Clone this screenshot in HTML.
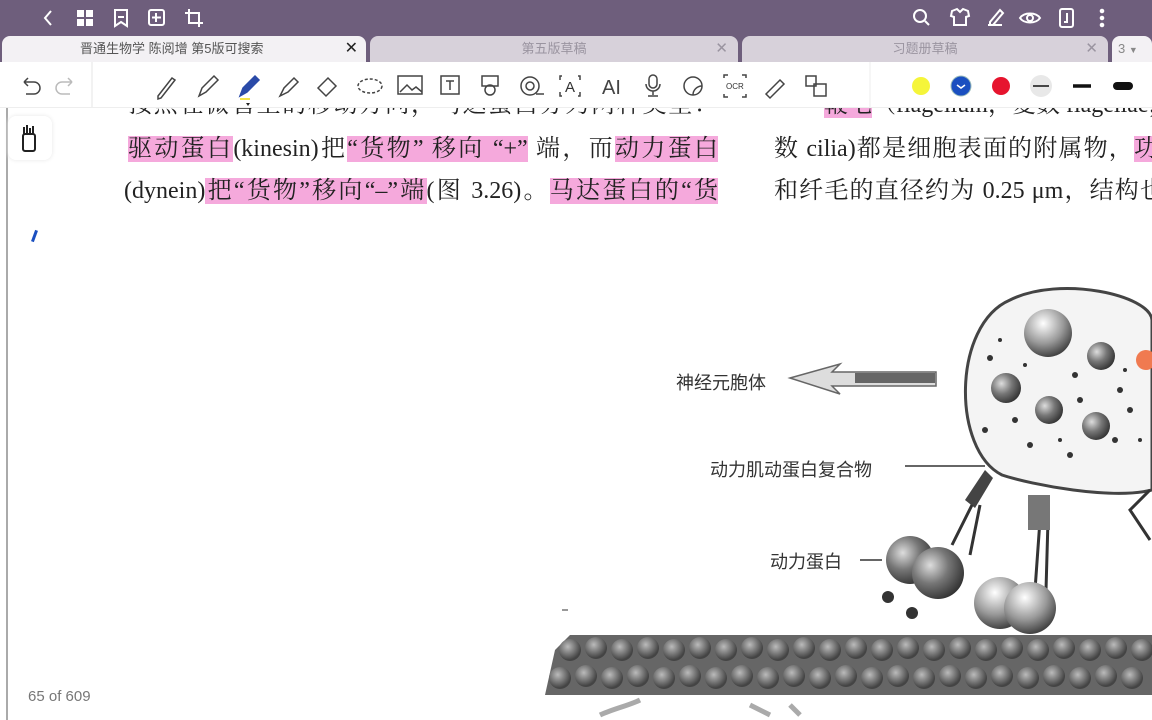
<!DOCTYPE html>
<html><head><meta charset="utf-8"><style>
*{margin:0;padding:0;box-sizing:border-box}
body{width:1152px;height:720px;overflow:hidden;background:#fff;position:relative;font-family:"Liberation Sans","Noto Sans CJK SC",sans-serif}
.top{position:absolute;left:0;top:0;width:1152px;height:36px;background:#6e5e7c}
.tabs{position:absolute;left:0;top:36px;width:1152px;height:26px;background:#6e5e7c}
.tab{position:absolute;top:0;height:26px;border-radius:8px 8px 0 0;font-size:13px;color:#9a94a0;text-align:center;line-height:26px}
.tb{position:absolute;left:0;top:62px;width:1152px;height:46px;background:#fff;border-bottom:1px solid #eee}
.txt{position:absolute;font-family:"Liberation Serif","Noto Serif CJK SC",serif;font-size:24px;color:#222;white-space:nowrap;text-align:justify;text-align-last:justify;line-height:34px}
.hl{background:#f5a9dc}
.lbl{position:absolute;font-family:"Liberation Sans","Noto Sans CJK SC",sans-serif;font-size:18px;color:#333}
</style></head><body>
<div class="top">
<svg width="1152" height="36" style="position:absolute;left:0;top:0" fill="none" stroke="#fff" stroke-width="2">
<path d="M51 11l-6 7 6 7"/>
<rect x="77" y="10" width="7" height="7" fill="#fff" stroke="none"/><rect x="86" y="10" width="7" height="7" fill="#fff" stroke="none"/><rect x="77" y="19" width="7" height="7" fill="#fff" stroke="none"/><rect x="86" y="19" width="7" height="7" fill="#fff" stroke="none"/>
<path d="M115 10h12v16l-6-4-6 4z"/><path d="M118 17h6"/>
<rect x="149" y="10" width="15" height="15" rx="2"/><path d="M156 13v9M152 17.5h9"/>
<path d="M189 9v14h14M185 13h14v14"/>
<circle cx="920" cy="16" r="6"/><path d="M925 21l4 4"/>
<path d="M952 11l5-2 3 3 3-3 5 2 1 5-3 1v8h-12v-8l-3-1z"/>
<path d="M988 25h14M990 22l10-12 3 3-10 12h-3z"/>
<path d="M1020 18c4-6 16-6 20 0-4 6-16 6-20 0z"/><circle cx="1030" cy="18" r="3"/>
<rect x="1060" y="9" width="13" height="18" rx="2"/><path d="M1067 13v9h-3"/>
<circle cx="1102" cy="11" r="1.3" fill="#fff"/><circle cx="1102" cy="18" r="1.3" fill="#fff"/><circle cx="1102" cy="25" r="1.3" fill="#fff"/>
</svg></div>
<div class="tabs">
<div class="tab" style="left:2px;width:364px;background:#f3f1f4;color:#555;text-align:left;padding-left:78px">晋通生物学 陈阅增 第5版可搜索<span style="position:absolute;right:8px;color:#222;font-size:16px">✕</span></div>
<div class="tab" style="left:370px;width:368px;background:#d7d1da">第五版草稿<span style="position:absolute;right:10px;font-size:15px">✕</span></div>
<div class="tab" style="left:742px;width:366px;background:#d7d1da">习题册草稿<span style="position:absolute;right:10px;font-size:15px">✕</span></div>
<div class="tab" style="left:1112px;width:40px;background:#f3f1f4;text-align:left;padding-left:6px;color:#888">3 <span style="font-size:9px">▼</span></div>
</div>
<div class="tb">
<svg width="1152" height="46" style="position:absolute;left:0;top:0" fill="none" stroke="#444" stroke-width="1.5">
<path d="M24 20h10a6 6 0 010 12h-8M24 20l4-4M24 20l4 4"/>
<path d="M72 20H62a6 6 0 000 12h8M72 20l-4-4M72 20l-4 4" stroke="#bbb"/>
<line x1="92" y1="0" x2="92" y2="46" stroke="#eee"/>
<path d="M158 34l14-18 3 2-14 18-3 1z"/>
<path d="M199 34l3-8 12-12 4 4-12 12z"/>
<path d="M240 34l3-8 12-12 4 4-12 12z" stroke="#2a4aa8" fill="#2a4aa8"/><path d="M240 37h10" stroke="#f3e34a" stroke-width="2"/><path d="M246 41l2 3 2-3z" fill="#222" stroke="none"/>
<path d="M280 34l4-8 10-10 4 4-10 10z"/>
<path d="M318 26l10-10 8 8-10 10z"/>
<ellipse cx="370" cy="24" rx="12" ry="7" stroke-dasharray="3 2"/>
<rect x="398" y="14" width="24" height="18"/><path d="M400 30l7-7 5 5 4-3 6 5"/>
<rect x="441" y="14" width="18" height="18"/><path d="M446 19h8M450 19v9"/>
<rect x="482" y="14" width="16" height="10"/><circle cx="490" cy="28" r="5"/>
<circle cx="530" cy="24" r="9"/><circle cx="530" cy="24" r="4"/><path d="M536 32h8"/>
<path d="M562 14h-2v4M578 14h2v4M562 34h-2v-4M578 34h2v-4"/><text x="565" y="30" font-size="15" fill="#333" stroke="none">A</text>
<text x="602" y="32" font-size="20" fill="#444" stroke="none">AI</text>
<rect x="649" y="13" width="8" height="13" rx="4"/><path d="M646 22a7 7 0 0014 0M653 29v4M648 34h10"/>
<circle cx="693" cy="24" r="9"/><path d="M693 33c0-5 4-9 9-9"/>
<path d="M724 16v-3h4M746 16v-3h-4M724 32v3h4M746 32v3h-4"/><text x="726" y="27" font-size="8" fill="#333" stroke="none">OCR</text>
<path d="M766 32l14-14 4 4-14 14z"/>
<rect x="806" y="14" width="10" height="10"/><rect x="814" y="22" width="12" height="12"/>
<line x1="870" y1="0" x2="870" y2="46" stroke="#f3f3f3"/>
<circle cx="921" cy="24" r="9" fill="#f5f53a" stroke="none"/>
<circle cx="961" cy="24" r="10" fill="#1a4fc0" stroke="#9bb" stroke-width="1"/><path d="M957 23l4 3 4-3" stroke="#fff"/>
<circle cx="1001" cy="24" r="9" fill="#e6142e" stroke="none"/>
<circle cx="1041" cy="24" r="11" fill="#e8e8e8" stroke="none"/><path d="M1033 24h16" stroke="#111"/>
<path d="M1073 24h18" stroke="#111" stroke-width="3.5"/>
<path d="M1117 24h12" stroke="#111" stroke-width="8" stroke-linecap="round"/>
</svg></div>
<div style="position:absolute;left:6px;top:108px;width:2px;height:612px;background:#aaa"></div>
<div style="position:absolute;left:8px;top:116px;width:44px;height:44px;border-radius:8px;background:#fff;box-shadow:0 0 4px #e6e6e6"></div>
<svg width="20" height="30" style="position:absolute;left:20px;top:124px"><rect x="3" y="10" width="12" height="17" rx="2" fill="none" stroke="#222" stroke-width="2"/><path d="M4 11V3M7 11V1M10 11V4M13 11V2" stroke="#222" stroke-width="2"/></svg>
<div style="position:absolute;left:33px;top:230px;width:3px;height:12px;background:#1a4fc0;transform:rotate(20deg)"></div>
<div style="position:absolute;left:0;top:108px;width:1152px;height:612px;overflow:hidden">
<div class="txt" style="left:128px;top:-20px;width:590px">按照在微管上的移动方向，马达蛋白分为两种类型：</div>
<div class="txt" style="left:824px;top:-20px;width:340px"><span class="hl">鞭毛</span>（flagellum，复数 flagellae，</div>
</div>
<div class="txt" style="left:128px;top:132px;width:590px"><span class="hl">驱动蛋白</span>(kinesin)把<span class="hl">“货物” 移向 “+”</span> 端，而<span class="hl">动力蛋白</span></div>
<div class="txt" style="left:124px;top:174px;width:594px">(dynein)<span class="hl">把“货物”移向“–”端</span>(图 3.26)。<span class="hl">马达蛋白的“货</span></div>
<div style="position:absolute;left:0;top:120px;width:1152px;height:100px;overflow:hidden">
<div class="txt" style="left:774px;top:12px;width:384px">数 cilia)都是细胞表面的附属物，<span class="hl">功</span></div>
<div class="txt" style="left:774px;top:54px;width:390px">和纤毛的直径约为 0.25 μm，结构也</div>
</div>
<div class="lbl" style="left:676px;top:369px">神经元胞体</div>
<div class="lbl" style="left:710px;top:456px">动力肌动蛋白复合物</div>
<div class="lbl" style="left:770px;top:548px">动力蛋白</div>
<div style="position:absolute;left:28px;top:688px;font-size:15px;color:#777">65 of 609</div>
<svg width="1152" height="720" style="position:absolute;left:0;top:0">
<defs><radialGradient id="g" cx="0.35" cy="0.35" r="0.7"><stop offset="0" stop-color="#ddd"/><stop offset="0.5" stop-color="#777"/><stop offset="1" stop-color="#333"/></radialGradient>
<radialGradient id="w" cx="0.4" cy="0.3" r="0.7"><stop offset="0" stop-color="#fff"/><stop offset="0.6" stop-color="#999"/><stop offset="1" stop-color="#444"/></radialGradient>
<radialGradient id="m" cx="0.4" cy="0.35" r="0.6"><stop offset="0" stop-color="#bbb"/><stop offset="1" stop-color="#444"/></radialGradient></defs>
<path d="M790 378l50-14-8 8h104v14H832l8 8z" fill="#ddd" stroke="#666" stroke-width="1.5"/><rect x="855" y="373" width="80" height="10" fill="#666"/>
<path d="M1010 300c50-25 140-5 142 20v170c-40 10-120-5-150-15-50-25-50-150 8-175z" fill="#f4f4f4" stroke="#444" stroke-width="3"/>
<circle cx="1048" cy="333" r="24" fill="url(#w)"/>
<circle cx="1101" cy="356" r="14" fill="url(#g)"/><circle cx="1006" cy="388" r="15" fill="url(#g)"/><circle cx="1049" cy="410" r="14" fill="url(#g)"/><circle cx="1096" cy="426" r="14" fill="url(#g)"/>
<circle cx="1146" cy="360" r="10" fill="#f07a50"/>
<g fill="#333"><circle cx="990" cy="358" r="3"/><circle cx="1015" cy="420" r="3"/><circle cx="1075" cy="375" r="3"/><circle cx="1080" cy="400" r="3"/><circle cx="1120" cy="390" r="3"/><circle cx="1030" cy="445" r="3"/><circle cx="1070" cy="455" r="3"/><circle cx="1115" cy="440" r="3"/><circle cx="1130" cy="410" r="3"/><circle cx="985" cy="430" r="3"/><circle cx="1060" cy="440" r="2"/><circle cx="1125" cy="370" r="2"/><circle cx="1000" cy="340" r="2"/><circle cx="1025" cy="365" r="2"/><circle cx="1140" cy="440" r="2"/></g>
<path d="M905 466h80" stroke="#333" stroke-width="1.5"/><path d="M860 560h22" stroke="#333" stroke-width="1.5"/>
<path d="M985 470l-20 30 10 8 18-30z" fill="#444"/><path d="M972 505l-20 40M980 505l-10 50M1040 520l-5 70M1048 520l-2 70M1150 490l-20 20 20 30" stroke="#333" stroke-width="3" fill="none"/>
<rect x="1028" y="495" width="22" height="35" fill="#777"/>
<circle cx="910" cy="560" r="24" fill="url(#g)"/><circle cx="938" cy="573" r="26" fill="url(#g)"/>
<circle cx="888" cy="597" r="6" fill="#333"/><circle cx="912" cy="613" r="6" fill="#333"/>
<circle cx="1000" cy="603" r="26" fill="url(#w)"/><circle cx="1030" cy="608" r="26" fill="url(#w)"/>
<path d="M562 610h6" stroke="#333"/>
<path d="M555 650l15-15h582v60H545z" fill="#666"/>
<g fill="url(#m)">
<circle cx="570" cy="650" r="11"/><circle cx="596" cy="648" r="11"/><circle cx="622" cy="650" r="11"/><circle cx="648" cy="648" r="11"/><circle cx="674" cy="650" r="11"/><circle cx="700" cy="648" r="11"/><circle cx="726" cy="650" r="11"/><circle cx="752" cy="648" r="11"/><circle cx="778" cy="650" r="11"/><circle cx="804" cy="648" r="11"/><circle cx="830" cy="650" r="11"/><circle cx="856" cy="648" r="11"/><circle cx="882" cy="650" r="11"/><circle cx="908" cy="648" r="11"/><circle cx="934" cy="650" r="11"/><circle cx="960" cy="648" r="11"/><circle cx="986" cy="650" r="11"/><circle cx="1012" cy="648" r="11"/><circle cx="1038" cy="650" r="11"/><circle cx="1064" cy="648" r="11"/><circle cx="1090" cy="650" r="11"/><circle cx="1116" cy="648" r="11"/><circle cx="1142" cy="650" r="11"/>
<circle cx="560" cy="678" r="11"/><circle cx="586" cy="676" r="11"/><circle cx="612" cy="678" r="11"/><circle cx="638" cy="676" r="11"/><circle cx="664" cy="678" r="11"/><circle cx="690" cy="676" r="11"/><circle cx="716" cy="678" r="11"/><circle cx="742" cy="676" r="11"/><circle cx="768" cy="678" r="11"/><circle cx="794" cy="676" r="11"/><circle cx="820" cy="678" r="11"/><circle cx="846" cy="676" r="11"/><circle cx="872" cy="678" r="11"/><circle cx="898" cy="676" r="11"/><circle cx="924" cy="678" r="11"/><circle cx="950" cy="676" r="11"/><circle cx="976" cy="678" r="11"/><circle cx="1002" cy="676" r="11"/><circle cx="1028" cy="678" r="11"/><circle cx="1054" cy="676" r="11"/><circle cx="1080" cy="678" r="11"/><circle cx="1106" cy="676" r="11"/><circle cx="1132" cy="678" r="11"/></g>
<path d="M600 715c10-5 30-10 40-15M750 705l20 10M790 705l10 10" stroke="#aaa" stroke-width="5" fill="none"/>
</svg>
</body></html>
